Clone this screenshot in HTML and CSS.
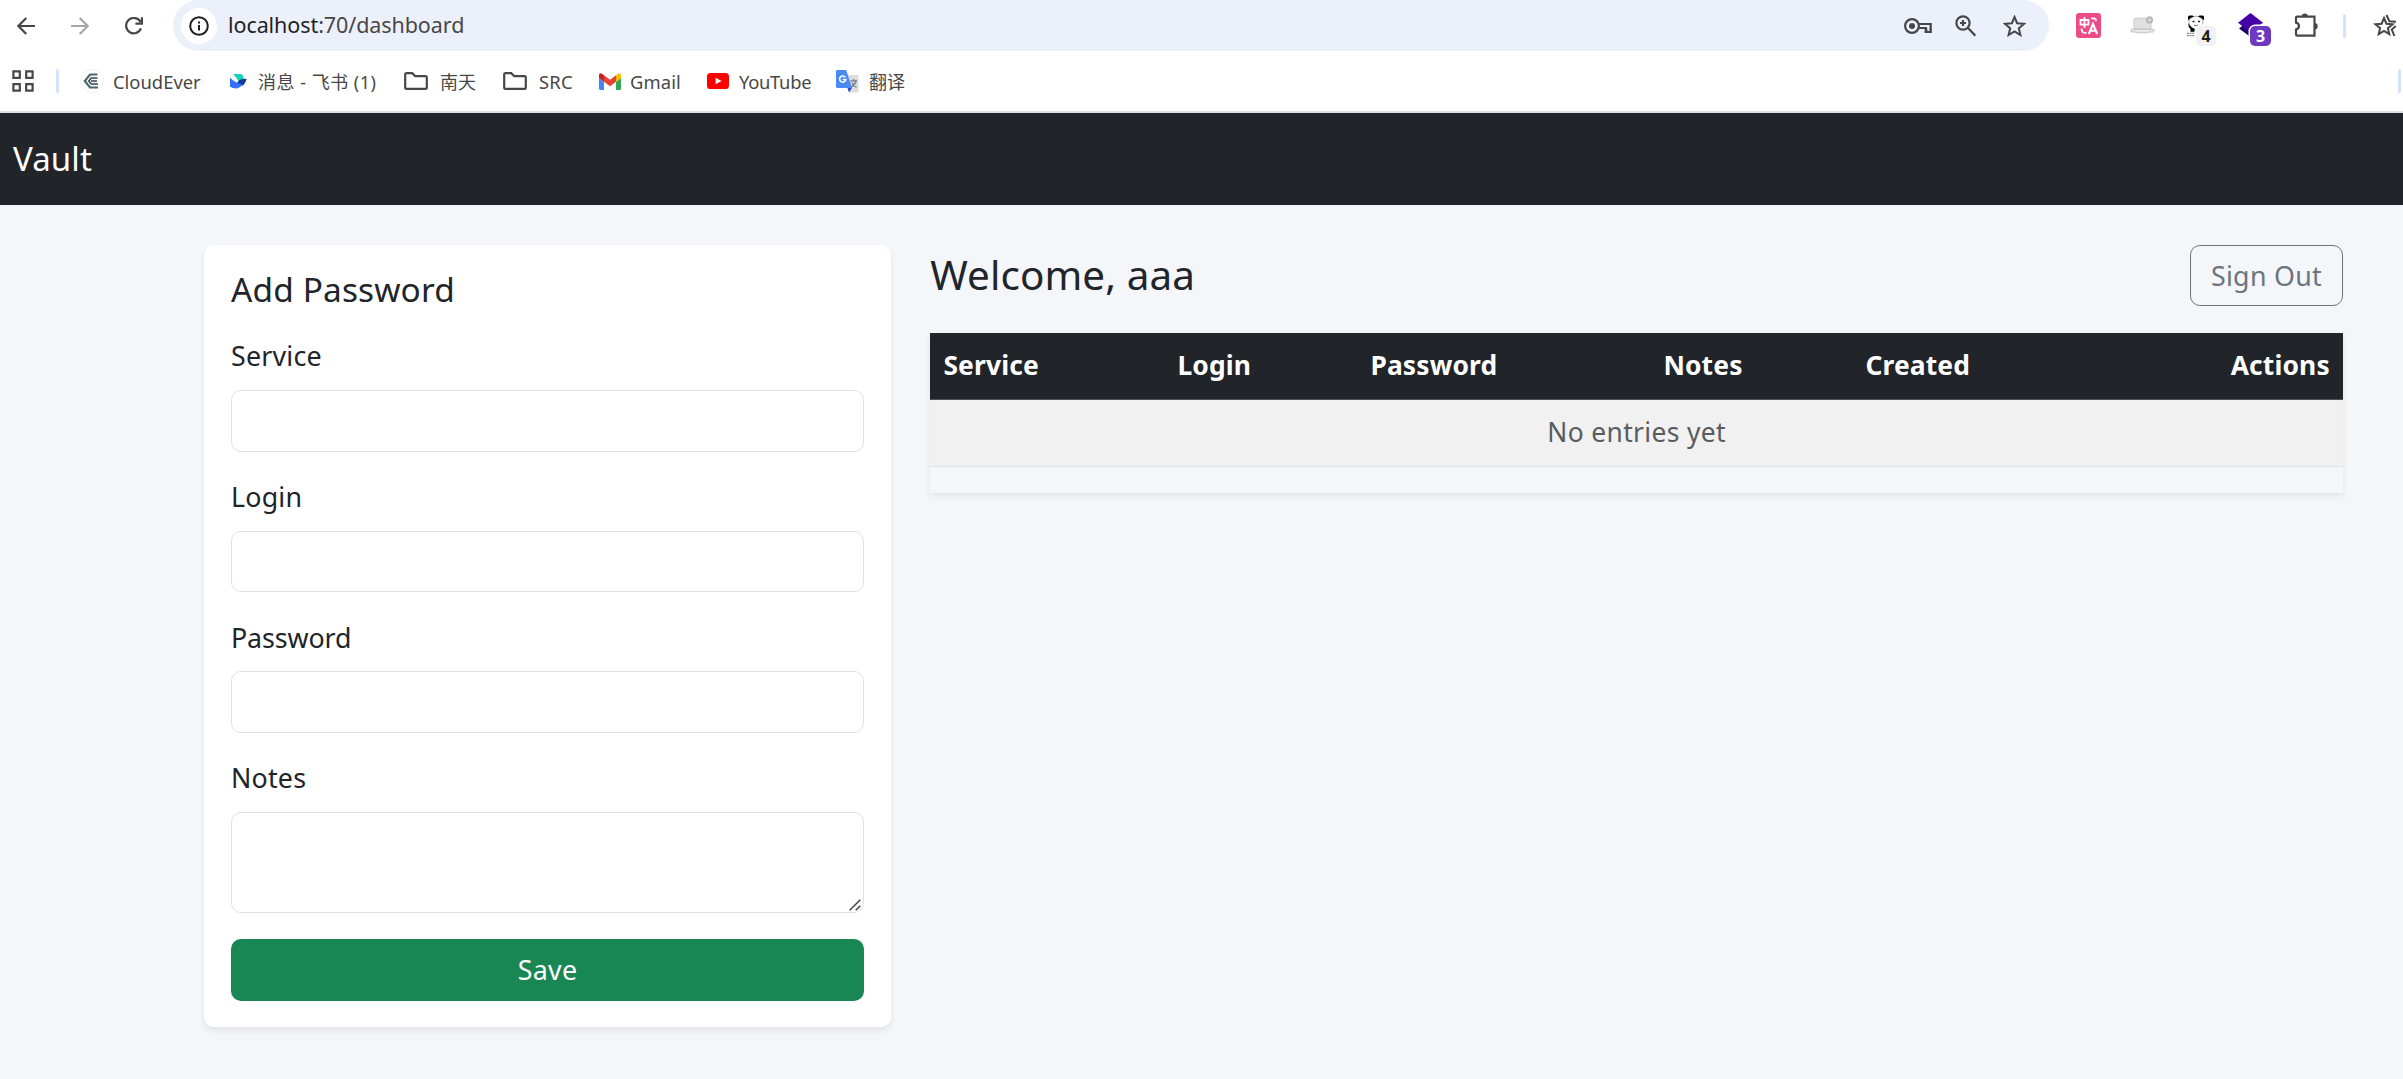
FILE: index.html
```html
<!DOCTYPE html>
<html lang="en">
<head>
<meta charset="utf-8">
<title>Vault</title>
<link rel="stylesheet" href="styles.css">
</head>
<body>
<header class="browser">
  <div class="toolbar">
    <svg class="ico back" width="18" height="18" viewBox="0 0 18 18"><path d="M18 9H1.8M9.3 1L1.3 9l8 8"/></svg>
    <svg class="ico forward" width="18" height="18" viewBox="0 0 18 18"><path d="M0 9h16.2M8.7 1l8 8-8 8"/></svg>
    <svg class="ico reload" width="18" height="18" viewBox="0 0 18 18"><path d="M16 11.4A7.7 7.7 0 1 1 15.600 5M17 .3v6.400h-6.600"/></svg>
    <div class="omnibox">
      <span class="site-info"><svg class="ico" width="20" height="20" viewBox="0 0 20 20"><circle cx="10" cy="10" r="8.800"/><path d="M10 9v5.400M10 5.400v2.200"/></svg></span>
      <span class="url">localhost<span class="url-path">:70/dashboard</span></span>
      <svg class="ico key" width="28" height="18" viewBox="0 0 28 18"><circle cx="8" cy="9" r="6.900"/><circle class="fill" cx="8" cy="9" r="3"/><path d="M14.800 7h11.900v8h-5v-4h-7"/><path class="thin" d="M21.800 14.800h4.600v-3.600M22.600 11v3"/></svg>
      <svg class="ico zoom" width="21" height="22" viewBox="0 0 21 22"><circle cx="8" cy="8" r="6.600"/><path d="M13 13l7.300 7.700M8 5v6M5 8h6"/></svg>
      <svg class="ico star" width="23" height="22" viewBox="0 0 23 22"><path d="M11.500 2l2.600 6.200 6.900.6-5.200 4.500 1.600 6.700-5.900-3.600L5.600 20l1.600-6.700L2 8.800l6.900-.6z"/></svg>
    </div>
    <svg class="translate-ext" width="25" height="25" viewBox="0 0 25 25"><rect width="25" height="25" rx="3" fill="#ec4b85"/><g fill="none" stroke="#fff" stroke-width="1.800"><path d="M4.500 7h8v4.600h-8zM8.500 4v11"/><path d="M15 5.400h2.600q2.400 0 2.400 2.800M5.600 15.500q0 4.300 3 4.300h2"/><path stroke-width="2.100" d="M12.800 21l4.200-10 4.200 10M14.300 17.800h5.400"/></g></svg>
    <svg class="laptop-ext" width="25" height="18" viewBox="0 0 25 18"><path d="M4 3.500q0-1.300 1.300-1.300h14.400q1.300 0 1.300 1.300V13H4z" fill="#e0e0e0" stroke="#c9c9c9"/><path d="M1 13.300h23v1.700q0 1-1 1h-4l-1 .8H7l-1-.8H2q-1 0-1-1z" fill="#e8e8e8" stroke="#c4c4c4"/><circle cx="19.500" cy="3.900" r="2.700" fill="#d8d8d8" stroke="#b3b3b3" stroke-width="1.700"/></svg>
    <span class="ext panda">
      <svg width="18" height="22" viewBox="0 0 18 22"><ellipse cx="9" cy="7.500" rx="7" ry="6.300" fill="#fff" stroke="#999" stroke-width=".8"/><path d="M1 5.500V2q0-1.500 1.500-1.500h3L7 1.500Q3 2.500 1 5.500zM17 5.500V2q0-1.500-1.500-1.500h-3L11 1.500q4 1 6 4z"/><path d="M1.200 8q3 5.500 7.300 6.200v2.500H3.500V14Q1 12 1.200 8z"/><path d="M5.500 6.500h2M11 6.500h2" stroke="#222" stroke-width="1.600"/><path d="M7 10q2 1.500 4 0" fill="none" stroke="#333" stroke-width=".7"/><path d="M0 18.300h8M0 20.700h8" stroke="#888" stroke-width="1.300" stroke-dasharray="2 .6"/></svg>
      <b class="badge badge-light">4</b>
    </span>
    <span class="ext stack">
      <svg width="25" height="24" viewBox="0 0 25 24"><path d="M1 15.500l4.500-3.500 7 5.500L20 12l4 3.500L12.500 24z" fill="#22006f"/><path d="M12.500 0L25 9.800 12.500 19.500 0 9.800z" fill="#4600a8"/></svg>
      <b class="badge badge-purple">3</b>
    </span>
    <svg class="ico puzzle" width="25" height="25" viewBox="0 0 25 25"><path d="M3 3.600h17.500v19H3a1 1 0 0 1-1-1v-5.100a3.500 3.500 0 0 0 0-6.900V4.600a1 1 0 0 1 1-1z"/><path class="fill" d="M7.800 3.500a3 3 0 0 1 6 0zM20.500 10a3.200 3.200 0 0 1 0 6.400z"/></svg>
    <i class="rule"></i>
    <svg class="ico starlist" width="26" height="24" viewBox="0 0 26 24"><path d="M11 4l2.400 5.700 6.200.5-4.700 4 1.400 6-5.300-3.200-5.300 3.200 1.400-6-4.700-4 6.200-.5z"/><path d="M13.500 1l2.900 6.200 6.600.6M22.800 12l-4 3.500 2.600 6.500"/></svg>
  </div>
  <nav class="bookmarks">
    <svg class="ico apps" width="22" height="22" viewBox="0 0 22 22"><path d="M1.400 1.400h6.400v6.400H1.400zM14.200 1.400h6.400v6.400h-6.400zM1.400 14.200h6.400v6.400H1.400zM14.200 14.200h6.400v6.400h-6.400z"/></svg>
    <i class="rule"></i>
    <span class="bm cloud"><svg width="24" height="24" viewBox="0 0 24 24"><circle cx="12" cy="12" r="11.300" fill="#fff" stroke="#eef0f3"/><path d="M17.500 5.500H10L4.800 12l5.200 6.500h8" fill="none" stroke="#4b6673" stroke-width="2.200"/><path d="M17.500 9h-6.300L8.800 12l2.400 3h6.800M11 12h6" fill="none" stroke="#31434f" stroke-width="1.500"/></svg><span class="t">CloudEver</span></span>
    <span class="bm feishu"><svg width="17" height="15" viewBox="0 0 17 15"><path d="M3 0h8.500q2 2 2.200 4.600L9 8Q6 3 3 0z" fill="#13d3b5"/><path d="M7 9q3-5 9.800-4Q15.500 8 14 10.500 11 13.500 7 9z" fill="#133c9a"/><path d="M0 3.800Q5 9 12.500 10.500 9.500 14.500 5.500 14.500 1.500 14 0 12.500z" fill="#3370ff"/></svg><span class="t">消息 - 飞书 (1)</span></span>
    <span class="bm folder"><svg class="ico" width="24" height="18" viewBox="0 0 24 18"><path d="M2.600 1.200h5.600l3 2.900h10.200q1.400 0 1.400 1.400v9.900q0 1.400-1.400 1.400H2.600q-1.400 0-1.400-1.400V2.600q0-1.400 1.400-1.400z"/></svg><span class="t">南天</span></span>
    <span class="bm src"><svg class="ico" width="24" height="18" viewBox="0 0 24 18"><path d="M2.600 1.200h5.600l3 2.900h10.200q1.400 0 1.400 1.400v9.900q0 1.400-1.400 1.400H2.600q-1.400 0-1.400-1.400V2.600q0-1.400 1.400-1.400z"/></svg><span class="t">SRC</span></span>
    <span class="bm gmail"><svg width="22" height="17" viewBox="0 0 22 17"><path d="M0 5l5 3.700V17H1.500Q0 17 0 15.500z" fill="#4285f4"/><path d="M17 8.700L22 5v10.500q0 1.500-1.500 1.500H17z" fill="#34a853"/><path d="M17 2.200Q22-2 22 2.500V5l-5 3.700z" fill="#fbbc04"/><path d="M5 2.200l6 4.600 6-4.600v6.500l-6 4.600-6-4.600z" fill="#ea4335"/><path d="M5 2.200Q0-2 0 2.500V5l5 3.700z" fill="#c5221f"/></svg><span class="t">Gmail</span></span>
    <span class="bm youtube"><svg width="22" height="16" viewBox="0 0 22 16"><rect width="22" height="16" rx="3.600" fill="#f00"/><path d="M8.600 4.700v6.600L14.600 8z" fill="#fff"/></svg><span class="t">YouTube</span></span>
    <span class="bm gtrans"><svg width="23" height="23" viewBox="0 0 23 23"><path d="M8 5h13.500q1 0 1 1v15.500q0 1-1 1H13z" fill="#dcdcdc"/><path d="M11.500 18h4.500l-3 4.500z" fill="#2a4ec4"/><path d="M1.200 0h9L16 18H1.200Q0 18 0 16.800V1.200Q0 0 1.200 0z" fill="#4a8af4"/><path d="M9.300 7.300A3.100 3.100 0 1 0 9.800 9.500H6.800" fill="none" stroke="#fff" stroke-width="1.500"/><path d="M14.500 10.800h6.500M17.700 9v2M20 11q-1 4-5 6.300M15.800 12.500q1.500 3.300 4.700 4.800" fill="none" stroke="#6b7f86" stroke-width="1.200"/></svg><span class="t">翻译</span></span>
    <i class="rule end"></i>
  </nav>
</header>
<div class="navbar"><a class="brand">Vault</a></div>
<main class="container">
  <form class="card">
    <h5 class="card-title">Add Password</h5>
    <div class="field"><label>Service</label><input type="text"></div>
    <div class="field"><label>Login</label><input type="text"></div>
    <div class="field"><label class="l-pass">Password</label><input type="password"></div>
    <div class="field"><label>Notes</label><textarea></textarea><svg class="grip" width="12" height="12" viewBox="0 0 12 12"><path d="M.7 11.300L11.300.7M6.700 11.300l4.600-4.600"/></svg></div>
    <button class="save" type="button">Save</button>
  </form>
  <section class="entries">
    <div class="head"><h4>Welcome, aaa</h4><a class="signout">Sign Out</a></div>
    <div class="table-wrap">
      <table>
        <colgroup><col class="c1"><col class="c2"><col class="c3"><col class="c4"><col class="c5"><col></colgroup>
        <thead><tr><th>Service</th><th>Login</th><th>Password</th><th>Notes</th><th>Created</th><th class="end">Actions</th></tr></thead>
        <tbody><tr><td colspan="6">No entries yet</td></tr></tbody>
      </table>
    </div>
  </section>
</main>
</body>
</html>
```
FILE: styles.css
```css
* { box-sizing: border-box; }
html { font-size: 26.4px; }
body {
  margin: 0;
  height: 1079px;
  overflow: hidden;
  background: #f4f6fa;
  color: #212529;
  font-family: "Noto Sans", "Noto Sans CJK SC", sans-serif;
  line-height: 1.5;
}
svg { display: block; flex: none; }
h4, h5 { margin: 0; font-weight: 400; line-height: 1.2; }

/* browser chrome */
.browser { height: 113px; background: #fff; border-bottom: 2px solid #dee2e0; }
.toolbar { display: flex; align-items: center; height: 51px; padding-left: 17px; }
.ico { fill: none; stroke: #474747; stroke-width: 2.2; }
.ico .fill { fill: #474747; stroke: none; }
.ico .thin { stroke-width: 1.5; }
.forward { margin-left: 36px; stroke: #a5a5a5; }
.reload { margin-left: 36px; }
.omnibox {
  display: flex;
  align-items: center;
  flex: none;
  width: 1876px;
  height: 51px;
  margin-left: 30px;
  padding: 0 23px 0 8px;
  border-radius: 25.5px;
  background: #ecf0fa;
}
.site-info { display: grid; place-items: center; width: 36px; height: 36px; border-radius: 50%; background: #fff; }
.site-info .ico { stroke: #1f1f1f; stroke-width: 2; }
.url { flex: 1; margin-left: 11px; padding-bottom: 2px; font-size: 21.5px; line-height: 30px; letter-spacing: -0.08px; color: #1f1f1f; }
.url-path { color: #474747; }
.zoom { margin-left: 23px; }
.star { margin-left: 27px; stroke-width: 2; }
.translate-ext { margin-left: 27px; }
.laptop-ext { margin: 0 0 2px 29px; }
.ext { position: relative; align-self: flex-start; flex: none; }
.panda { width: 29px; margin: 15px 0 0 32px; }
.stack { width: 34px; margin: 13px 0 0 22px; }
.badge {
  position: absolute;
  border-radius: 5px;
  font-size: 16px;
  line-height: 21px;
  text-align: center;
  box-shadow: 0 0 0 1.5px #fff;
}
.badge-light { left: 9px; top: 11px; width: 20px; height: 20px; background: #f1f1f1; color: #1f1f1f; }
.badge-purple { left: 12px; top: 13px; width: 21px; height: 20px; background: #6d39c0; color: #fff; }
.puzzle { margin-left: 22px; }
.rule { flex: none; width: 3px; height: 24px; border-radius: 2px; background: #d3e3fd; }
.toolbar .rule { margin-left: 24px; }
.starlist { margin-left: 27px; stroke-width: 2; }

.bookmarks { display: flex; align-items: center; height: 60px; padding: 0 2px 0 12px; }
.bookmarks .rule { margin-left: 22px; }
.bookmarks .rule.end { margin-left: auto; }
.bm { display: flex; align-items: center; flex: none; font-size: 18.4px; line-height: 26px; color: #474747; white-space: nowrap; }
.bm .t { padding-top: 1px; }
.cloud { width: 150px; margin-left: 21px; gap: 9px; }
.feishu { width: 174px; gap: 11px; font-size: 18px; letter-spacing: .5px; }
.folder { width: 99px; gap: 12px; font-size: 18px; }
.src { width: 96px; gap: 12px; letter-spacing: .2px; }
.gmail { width: 108px; gap: 9px; letter-spacing: .1px; }
.youtube { width: 129px; gap: 10px; letter-spacing: -.3px; }
.gtrans { gap: 10px; font-size: 18px; }

/* page */
.navbar { display: flex; align-items: center; height: 92px; padding: 0 0 1px 13px; background: #212529; }
.brand { font-size: 33px; letter-spacing: .1px; color: #fff; }
.container { display: flex; align-items: flex-start; gap: 39.6px; padding: 40px 60px 0 204px; }
.card {
  flex: none;
  width: 686.6px;
  padding: 26.4px 26.4px 26.4px 27px;
  border-radius: 9.9px;
  background: #fff;
  box-shadow: 0 3.3px 6.6px rgba(0, 0, 0, .075);
}
.card-title { margin-bottom: 28.4px; font-size: 33.4px; line-height: 37.6px; letter-spacing: .15px; }
.field { position: relative; margin-bottom: 26.4px; }
label { display: block; margin-bottom: 14.4px; font-size: 26.8px; line-height: 38.4px; letter-spacing: .2px; }
.l-pass { letter-spacing: -.1px; }
input, textarea {
  display: block;
  width: 100%;
  height: 61.4px;
  margin: 0;
  padding: 0;
  border: 1px solid #dee2e6;
  border-radius: 9.9px;
  background: #fff;
  outline: none;
  resize: none;
}
textarea { height: 101px; }
.grip { position: absolute; right: 3px; bottom: 2px; fill: none; stroke: #444; stroke-width: 1.5; }
.save {
  display: block;
  width: 100%;
  height: 61.4px;
  border: 0;
  border-radius: 9.9px;
  background: #198754;
  color: #fff;
  font: inherit;
  font-size: 26.8px;
  letter-spacing: .3px;
}
.entries { flex: none; width: 1412.8px; }
.head { display: flex; align-items: center; justify-content: space-between; height: 61.4px; margin-bottom: 26.4px; }
.head h4 { font-size: 40.4px; letter-spacing: .1px; }
.signout {
  display: grid;
  place-items: center;
  width: 153px;
  height: 61px;
  border: 1px solid #6c757d;
  border-radius: 9.9px;
  color: #6c757d;
  font-size: 26.8px;
  letter-spacing: .3px;
}
.table-wrap { padding-bottom: 26.4px; box-shadow: 0 3.3px 6.6px rgba(0, 0, 0, .075); }
table { width: 100%; table-layout: fixed; border-collapse: separate; border-spacing: 0; }
.c1 { width: 234px; }
.c2 { width: 193px; }
.c3 { width: 293px; }
.c4 { width: 202px; }
.c5 { width: 240px; }
th, td { height: 67px; padding: 0 13.2px; border-bottom: 1px solid #4d5154; text-align: left; }
th { background: #212529; color: #fff; font-weight: 700; letter-spacing: .15px; }
th.end { text-align: right; }
td { border-color: #dee2e6; background: #f1f1f1; color: #595c5f; text-align: center; letter-spacing: .35px; }
```
